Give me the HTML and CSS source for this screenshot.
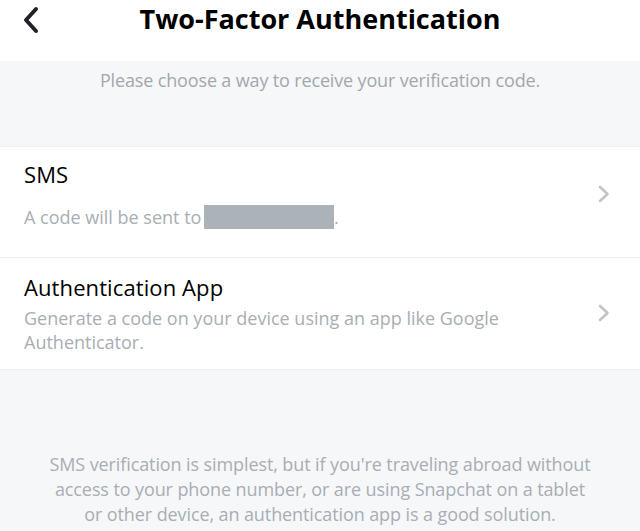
FILE: index.html
```html
<!DOCTYPE html>
<html>
<head>
<meta charset="utf-8">
<link rel="stylesheet" href="styles.css">
</head>
<body>
<div class="page">
  <header class="topbar">
    <button class="back" aria-label="Back">
      <svg width="18" height="28" viewBox="0 0 18 28"><path d="M14 3 L4 14 L14 25" fill="none" stroke="#1f2226" stroke-width="4" stroke-linecap="round" stroke-linejoin="round"/></svg>
    </button>
    <h1 class="title">Two-Factor Authentication</h1>
    <span class="spacer"></span>
  </header>
  <div class="intro">Please choose a way to receive your verification code.</div>
  <section class="options">
    <div class="option sms">
      <div class="option-text">
        <div class="option-title">SMS</div>
        <div class="option-desc">A code will be sent to <span class="redact"></span>.</div>
      </div>
      <svg class="chev" width="12" height="18" viewBox="0 0 12 18"><path d="M2 2 L9.5 9 L2 16" fill="none" stroke="#c2c4c7" stroke-width="2.6" stroke-linecap="round" stroke-linejoin="round"/></svg>
    </div>
    <div class="option app">
      <div class="option-text">
        <div class="option-title">Authentication App</div>
        <div class="option-desc">Generate a code on your device using an app like Google Authenticator.</div>
      </div>
      <svg class="chev" width="12" height="18" viewBox="0 0 12 18"><path d="M2 2 L9.5 9 L2 16" fill="none" stroke="#c2c4c7" stroke-width="2.6" stroke-linecap="round" stroke-linejoin="round"/></svg>
    </div>
  </section>
  <p class="footer-note">SMS verification is simplest, but if you're traveling abroad without<br>access to your phone number, or are using Snapchat on a tablet<br>or other device, an authentication app is a good solution.</p>
</div>
</body>
</html>
```
FILE: styles.css
```css
* { box-sizing: border-box; }
html, body { margin: 0; padding: 0; }
body {
  background: #f6f7f9;
  font-family: "Open Sans", "Lato", sans-serif;
  width: 640px;
  height: 531px;
  overflow: hidden;
}
.page { display: flex; flex-direction: column; }
.topbar {
  background: #ffffff;
  height: 61px;
  display: grid;
  grid-template-columns: 60px 1fr 60px;
  align-items: start;
}
.back {
  border: 0;
  background: none;
  padding: 0;
  margin: 6px 0 0 22px;
  width: 18px;
  height: 28px;
  display: block;
}
.back svg { display: block; }
.title {
  margin: 0;
  text-align: center;
  font-size: 27px;
  font-weight: 700;
  color: #000;
  line-height: 38px;
  letter-spacing: 0;
}
.intro {
  height: 85px;
  text-align: center;
  color: #a2a8ae;
  font-size: 18px;
  line-height: 24px;
  padding-top: 7px;
  letter-spacing: -0.15px;
}
.options {
  background: #ffffff;
  border-top: 1px solid #eef0f2;
  border-bottom: 1px solid #eef0f2;
}
.option {
  display: flex;
  align-items: center;
  padding: 0 30px 0 24px;
}
.option.sms {
  padding-top: 12px;
  padding-bottom: 28px;
  border-bottom: 1px solid #eef0f2;
}
.option.app {
  padding-top: 14px;
  padding-bottom: 15px;
}
.option-text { flex: 1; }
.option-title {
  font-size: 22px;
  color: #000;
  line-height: 30px;
  letter-spacing: 0.1px;
}
.sms .option-title { margin-bottom: 16px; }
.app .option-title { margin-bottom: 4px; }
.option-desc {
  font-size: 18px;
  color: #a8aeb4;
  line-height: 24px;
  max-width: 520px;
}
.redact {
  display: inline-block;
  width: 130px;
  height: 24px;
  background: #abb2b8;
  vertical-align: top;
  margin-left: -2px;
}
.chev { flex: none; }
.footer-note {
  margin: 82px 0 0;
  text-align: center;
  color: #a8aeb4;
  font-size: 18px;
  line-height: 25px;
  letter-spacing: -0.1px;
}
```
